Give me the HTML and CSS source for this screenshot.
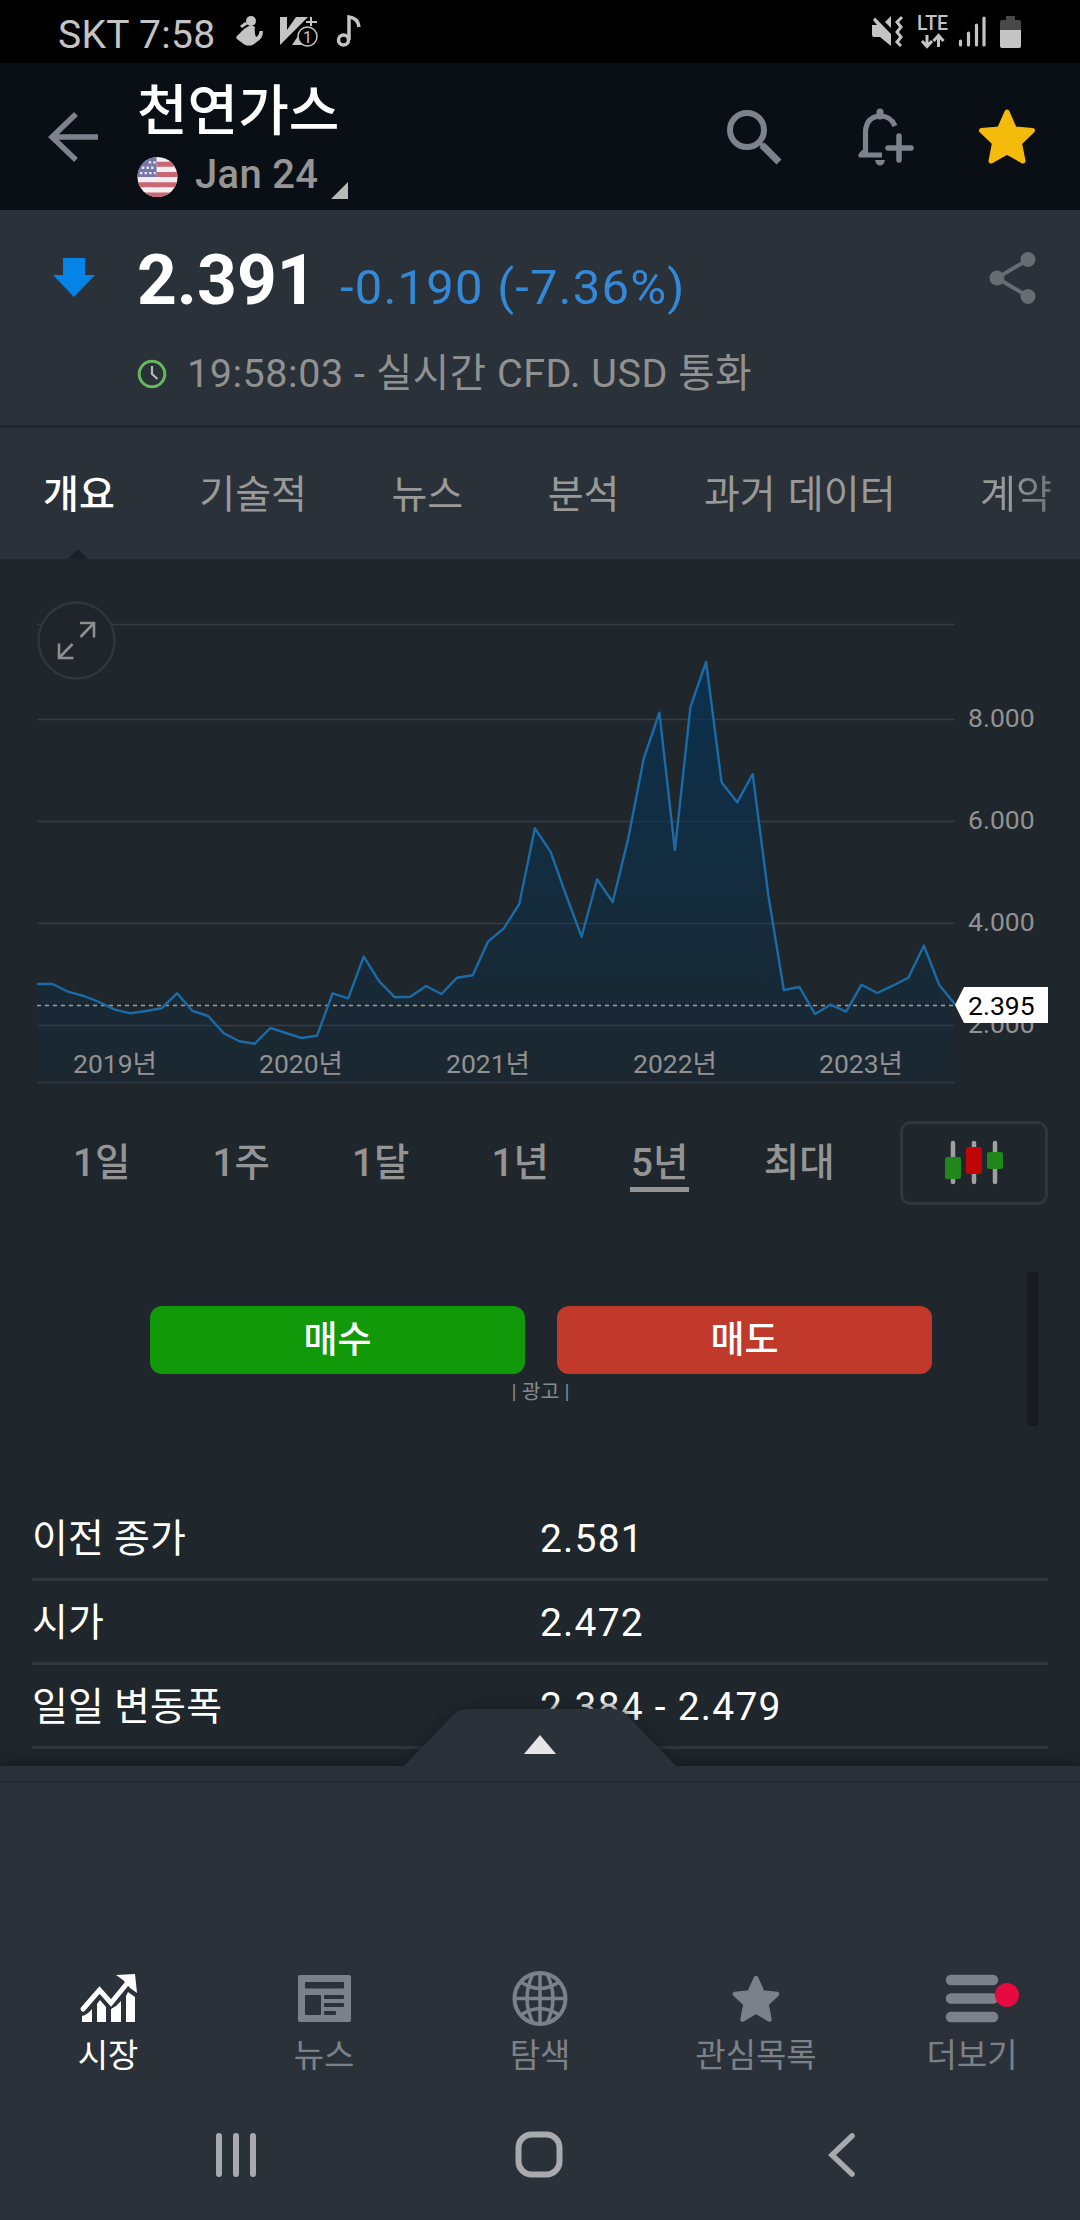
FILE: index.html
```html
<!DOCTYPE html>
<html lang="ko">
<head>
<meta charset="utf-8">
<title>천연가스</title>
<link rel="stylesheet" href="styles.css">
</head>
<body>
<div class="phone">
  <div class="status">
    <span class="carrier">SKT 7:58</span>
    <svg class="status-left" width="130" height="40" viewBox="0 0 130 40">
      <g fill="#c4c4c4">
        <circle cx="16" cy="9" r="5"/>
        <path d="M10 10 L5 14 L7 16 L13 12 Z"/>
        <path d="M12 15 Q16 12 20 15 Q19 20 21 25 Q24 24 24.500 19 L28 19 Q28 27 21 30.500 Q17 35 10 33 L2 27 Q0 25 3 23 L9 17 Z"/>
        <path d="M45 5 H52 V18 L61 5 H73 L45 33 Z"/>
        <path d="M57 33 L63 24 L67 33 Z"/>
      </g>
      <path d="M76 5 V14 M71 10 H82" stroke="#c4c4c4" stroke-width="2"/>
      <circle cx="72.500" cy="24.500" r="9.500" fill="#000" stroke="#c4c4c4" stroke-width="1.500"/>
      <text class="badge-num" x="72.500" y="30.500" text-anchor="middle">1</text>
      <g fill="none" stroke="#c4c4c4" stroke-width="3.500">
        <circle cx="108.500" cy="28" r="5"/>
        <path d="M114 28 V5 Q123 6 124 15"/>
      </g>
    </svg>
    <svg class="status-right" width="154" height="40" viewBox="0 0 154 40">
      <g fill="#c4c4c4">
        <path d="M2 13 H7 L3 8 L5 5.500 L21 22 V34 L10 25 H4 Q2 25 2 23 Z"/>
        <path d="M21 4 V16 L15 10 Z"/>
      </g>
      <path d="M32 5 L27 10 L31 15 L27 20 L31 25 L27 30 L31 34" fill="none" stroke="#c4c4c4" stroke-width="3"/>
      <text class="lte" x="47" y="17.500" textLength="31" lengthAdjust="spacingAndGlyphs">LTE</text>
      <path d="M57 23 V34 M52 29 L57 34.500 L62 29 M68.500 35 V24 M63.500 29 L68.500 23.500 L73.500 29" fill="none" stroke="#c4c4c4" stroke-width="3"/>
      <path d="M90.500 29 V33 M98.500 21 V33 M106.500 13 V33 M114 6 V33" stroke="#c4c4c4" stroke-width="3.200" stroke-linecap="round"/>
      <path d="M136 4 H145 V8 H149 Q151 8 151 10 V19 H130 V10 Q130 8 132 8 H136 Z" fill="#484848"/>
      <path d="M130 18 H151 V34 Q151 36 149 36 H132 Q130 36 130 34 Z" fill="#c4c4c4"/>
    </svg>
  </div>

  <header class="topbar">
    <svg class="back" width="52" height="52" viewBox="0 0 52 52"><path d="M50 26 H4 M28 3 L4 26 L28 49" fill="none" stroke="#7d828c" stroke-width="5.500"/></svg>
    <div class="heading">
      <h1>천연가스</h1>
      <div class="contract">
        <svg width="41" height="42" viewBox="0 0 42 42">
          <defs><clipPath id="round"><circle cx="21" cy="21" r="20.500"/></clipPath></defs>
          <g clip-path="url(#round)">
            <rect width="42" height="42" fill="#f3eef0"/>
            <path d="M20 8 H42 M20 18.500 H42 M0 29 H42 M0 39.500 H42" stroke="#ca6673" stroke-width="5.200"/>
            <rect width="20" height="21" fill="#7777a5"/>
            <path d="M12 6 H20 M5 11.500 H18 M3 17 H19" stroke="#e8e8f5" stroke-width="2.500" stroke-dasharray="2.500 2.200"/>
          </g>
        </svg>
        <span>Jan 24</span>
        <i class="corner"></i>
      </div>
    </div>
    <svg width="56" height="58" viewBox="0 0 56 58"><circle cx="21" cy="22" r="17" fill="none" stroke="#7d828c" stroke-width="6"/><path d="M36 37 L53 54" stroke="#7d828c" stroke-width="7"/><path d="M32 33 L38 39" stroke="#7d828c" stroke-width="4"/></svg>
    <svg width="58" height="60" viewBox="0 0 58 60">
      <g fill="none" stroke="#7d828c" stroke-width="5.200">
        <path d="M25 48 H6 L8.500 44 V25 Q9 10 23 9 Q34 9 38 19"/>
        <path d="M23 9 V5" stroke-width="7" stroke-linecap="round"/>
        <path d="M42 29 V53 M31 41 H54" stroke-width="5.500" stroke-linecap="round"/>
      </g>
      <path d="M1 49 Q2 45 7 42 L11 43 V49 Z M18 53 H28 Q27 58.500 23 58.500 Q19 58.500 18 53" fill="#7d828c"/>
    </svg>
    <svg width="58" height="58" viewBox="0 0 58 58"><path d="M29 4 L36.500 21 L54.500 22.500 L41.500 35 L45 53 L29 44 L13 53 L16.500 35 L3.500 22.500 L21.500 21 Z" fill="#f5bb0c" stroke="#f5bb0c" stroke-width="5" stroke-linejoin="round"/></svg>
  </header>

  <section class="quote">
    <svg class="down" width="42" height="40" viewBox="0 0 42 40"><path d="M10 0 H32 V17 H42 L21 39 L0 17 H10 Z" fill="#0683e6"/></svg>
    <div class="price-row"><strong>2.391</strong><span>-0.190 (-7.36%)</span></div>
    <svg class="share" width="48" height="54" viewBox="0 0 48 54"><path d="M40 8 L8 27 L40 46" fill="none" stroke="#686c73" stroke-width="4"/><g fill="#686c73"><circle cx="39" cy="8.500" r="7.500"/><circle cx="8" cy="27" r="7.500"/><circle cx="39" cy="45.500" r="7.500"/></g></svg>
    <div class="time-row">
      <svg width="30" height="30" viewBox="0 0 30 30"><circle cx="15" cy="15" r="12.800" fill="none" stroke="#67b65e" stroke-width="3"/><path d="M15 7 V15 L20.500 20" fill="none" stroke="#b5bab5" stroke-width="2.200"/></svg>
      <span>19:58:03 - 실시간 CFD. USD 통화</span>
    </div>
  </section>

  <nav class="tabs">
    <span class="tab active">개요</span><span class="tab">기술적</span><span class="tab">뉴스</span><span class="tab">분석</span><span class="tab">과거 데이터</span><span class="tab fade">계약</span>
  </nav>

  <main class="content">
    <svg class="chart" width="1080" height="541" viewBox="0 559 1080 541">
      <defs><linearGradient id="fill" x1="0" y1="661" x2="0" y2="1083" gradientUnits="userSpaceOnUse"><stop offset="0" stop-color="#073256" stop-opacity=".85"/><stop offset="1" stop-color="#07324e" stop-opacity=".12"/></linearGradient></defs>
      <path class="grid" d="M37 624.500 H955 M37 719.500 H955 M37 821.500 H955 M37 923.500 H955 M37 1025.500 H955 M37 1082.500 H955"/>
      <path id="area" fill="url(#fill)"/>
      <path d="M37 1005.500 H955" stroke="#9a9fa3" stroke-width="1.300" stroke-dasharray="4 4"/>
      <polyline id="line" fill="none" stroke="#1b6ca6" stroke-width="2.400" stroke-linejoin="round"/>
      <circle cx="76.500" cy="640.500" r="38" fill="#1f252b" stroke="#31363e" stroke-width="2.500"/>
      <path d="M80.500 637 L94 623 M80 623 H94 V637.500 M72.500 644 L59 658 M59 643.500 V658 H73.500" fill="none" stroke="#8e8e8e" stroke-width="2.600"/>
      <g class="axis">
        <text x="968" y="726.500">8.000</text><text x="968" y="828.500">6.000</text><text x="968" y="930.500">4.000</text><text x="968" y="1032.500">2.000</text>
        <g text-anchor="middle"><text x="115" y="1072.500">2019년</text><text x="301" y="1072.500">2020년</text><text x="488" y="1072.500">2021년</text><text x="675" y="1072.500">2022년</text><text x="861" y="1072.500">2023년</text></g>
      </g>
      <path d="M955 1005 L964 987 H1048 V1023 H964 Z" fill="#fff"/>
      <text class="last" x="968" y="1014.500">2.395</text>
    </svg>

    <div class="periods">
      <div class="period-list">
        <span>1일</span><span>1주</span><span>1달</span><span>1년</span><span class="on">5년</span><span>최대</span>
      </div>
      <div class="candle">
        <svg width="60" height="46" viewBox="0 0 60 46"><path d="M9 3 V42 M30 3 V42 M51 3 V42" stroke="#a0a0a0" stroke-width="4.500" stroke-linecap="round"/><rect x="1" y="17" width="16" height="22" rx="2" fill="#21861b"/><rect x="22" y="7" width="16" height="27" rx="2" fill="#c00505"/><rect x="43" y="12" width="16" height="17" rx="2" fill="#21861b"/></svg>
      </div>
    </div>

    <div class="ad">
      <div class="trade"><span class="buy">매수</span><span class="sell">매도</span></div>
      <i class="ad-edge"></i>
      <small>| 광고 |</small>
    </div>

    <dl class="stats">
      <div><dt>이전 종가</dt><dd>2.581</dd></div>
      <div><dt>시가</dt><dd>2.472</dd></div>
      <div><dt>일일 변동폭</dt><dd>2.384 - 2.479</dd></div>
    </dl>
  </main>

  <footer class="dock">
    <svg class="handle" width="274" height="58" viewBox="0 0 274 58"><path d="M0 58 L50 6 Q56 0 64 0 H210 Q218 0 224 6 L274 58 Z" fill="#2a3138"/><path d="M137 26 L153 45 H121 Z" fill="#e6e6e6"/></svg>
    <div class="banner"></div>
    <div class="nav">
      <div class="item current">
        <svg width="60" height="60" viewBox="0 0 60 60">
          <path d="M5 41 L21.500 22 L33 35 L51 13" fill="none" stroke="#fff" stroke-width="5" stroke-linejoin="miter" stroke-linecap="round"/>
          <path d="M38 7 L57 6 L59 25 L52 20 L45 12 Z" fill="#fff"/>
          <path d="M4 54 V48 Q9 47 14 41 V54 Z M19 54 V36 L22 32 L28 39 V54 Z M33 54 V41 L38 38 L43 33 V54 Z M48 54 V28 L50 24 L57 29 V54 Z" fill="#fff"/>
        </svg><span>시장</span>
      </div>
      <div class="item">
        <svg width="60" height="60" viewBox="0 0 60 60"><rect x="4" y="7" width="53" height="47" rx="2" fill="#7c8189"/><g fill="#2a3138"><rect x="11" y="14" width="39" height="6.500" rx="1"/><rect x="11" y="27" width="16" height="20" rx="1"/><rect x="30" y="27" width="20" height="4" rx="1"/><rect x="30" y="35" width="20" height="4" rx="1"/><rect x="30" y="43" width="12" height="4" rx="1"/></g></svg><span>뉴스</span>
      </div>
      <div class="item">
        <svg width="60" height="60" viewBox="0 0 60 60"><g fill="none" stroke="#7c8189" stroke-width="3.500"><circle cx="30" cy="30.500" r="25.500" stroke-width="4"/><path d="M30 5 V56 M5 30.500 H55 M11 14 Q30 27 49 14 M11 47 Q30 34 49 47 M23 6 Q11 30 23 55 M37 6 Q49 30 37 55"/></g></svg><span>탐색</span>
      </div>
      <div class="item">
        <svg width="60" height="60" viewBox="0 0 60 60"><path d="M30 10 L36.500 24.500 L51 26 L40.500 36 L43.500 51.500 L30 43.500 L16.500 51.500 L19.500 36 L9 26 L23.500 24.500 Z" fill="#7c8189" stroke="#7c8189" stroke-width="4.500" stroke-linejoin="round"/></svg><span>관심목록</span>
      </div>
      <div class="item">
        <svg width="100" height="60" viewBox="-20 0 100 60"><path d="M9 12 H51 M9 30.500 H51 M9 49 H51" stroke="#7c8189" stroke-width="10.500" stroke-linecap="round"/><circle cx="65" cy="27" r="12" fill="#e50a40"/></svg><span>더보기</span>
      </div>
    </div>
    <div class="system">
      <svg width="46" height="46" viewBox="0 0 46 46"><path d="M6 4 V42 M23 4 V42 M40 4 V42" stroke="#a9aaad" stroke-width="6" stroke-linecap="round"/></svg>
      <svg width="50" height="50" viewBox="0 0 50 50"><rect x="4.500" y="4.500" width="41" height="40" rx="13" fill="none" stroke="#a9aaad" stroke-width="6"/></svg>
      <svg width="46" height="46" viewBox="0 0 46 46"><path d="M33 4 L13 23 L33 42" fill="none" stroke="#a9aaad" stroke-width="5.500" stroke-linecap="round"/></svg>
    </div>
  </footer>
</div>
<script src="chart.js"></script>
</body>
</html>
```
FILE: chart.js
```js
// Monthly closes, as plotted heights on the chart canvas.
const heights = [984, 984, 991.7, 996, 1002, 1009.7, 1013.3, 1011, 1008.3, 993.3, 1011, 1016, 1033.3, 1041.3, 1043.7, 1028, 1033, 1038, 1035.7, 993.3, 998.3, 956.7, 981.3, 997.3, 996.7, 986, 994, 977.7, 975.3, 941.3, 928.3, 904, 828.3, 851.7, 895, 936.7, 879.3, 902, 838.3, 758.3, 712.7, 850, 706.7, 662, 782.3, 802.3, 774, 895, 990, 987, 1014, 1004.7, 1011.7, 984.7, 993, 985.7, 977.7, 945.7, 985.3, 1004.3];
const step = (955 - 37) / (heights.length - 1);
const points = heights.map((y, i) => `${(37 + i * step).toFixed(1)},${y}`).join(' ');
document.getElementById('line').setAttribute('points', points);
document.getElementById('area').setAttribute('d', `M37,1083 L${points} L955,1083 Z`);
```
FILE: styles.css
```css
* { box-sizing: border-box; }
body { margin: 0; background: #1f262c; font-family: Roboto, "Noto Sans CJK KR", sans-serif; }
svg { display: block; flex: none; }
h1, dl, dd { margin: 0; }

.phone { width: 1080px; height: 2220px; display: flex; flex-direction: column; overflow: hidden; }

.status { height: 63px; background: #000; display: flex; align-items: center; padding: 6px 56px 0 58px; color: #c4c4c4; }
.carrier { font-size: 39px; line-height: 46px; white-space: nowrap; width: 177px; letter-spacing: .3px; }
.status-right { margin-left: auto; margin-top: -5px; }
.status-left { margin-top: -5px; }
.badge-num { font-size: 16px; fill: #c4c4c4; }
.lte { font-size: 20px; font-weight: 500; fill: #c4c4c4; }

.topbar { height: 147px; background: #0a0f16; display: flex; align-items: center; padding: 0 44px 0 48px; }
.back { margin-right: 37px; }
.heading { flex: 1; height: 147px; padding-top: 13px; }
h1 { font-size: 55px; line-height: 70px; font-weight: 500; color: #fff; }
.contract { display: flex; align-items: center; margin-top: 9px; height: 44px; color: #959595; font-size: 40px; line-height: 44px; font-weight: 500; }
.contract span { margin: -5px 13px 0 17px; letter-spacing: .3px; }
.corner { align-self: flex-end; border-left: 17px solid transparent; border-bottom: 17px solid #b8b8b8; }
.topbar > svg:nth-of-type(2) { margin-right: 75px; }
.topbar > svg:nth-of-type(3) { margin-right: 63px; }

.quote { height: 218px; background: #2a3138; border-bottom: 3px solid #22272e; display: grid; grid-template-columns: 84px 1fr 48px; grid-template-rows: 88px 60px; padding: 24px 43px 0 53px; align-items: center; row-gap: 22px; }
.price-row { display: flex; align-items: baseline; white-space: nowrap; padding-top: 6px; }
.price-row strong { font-size: 69.5px; line-height: 88px; color: #fff; width: 203px; }
.price-row span { font-size: 49px; color: #3389d8; letter-spacing: 1.2px; }
.time-row { grid-column: 2 / 4; display: flex; align-items: center; gap: 20px; color: #919191; font-size: 39.5px; line-height: 60px; white-space: nowrap; letter-spacing: .55px; }

.tabs { height: 131px; background: #2a3138; display: flex; align-items: center; gap: 84.5px; padding: 3px 0 0 43px; white-space: nowrap; color: #999; font-size: 39px; line-height: 60px; word-spacing: 2.5px; }
.tab { flex: none; position: relative; }
.active { color: #fff; font-weight: 500; }
.active::after { content: ""; position: absolute; left: 25px; bottom: -34px; border: 10px solid transparent; border-top: 0; border-bottom-color: #1a1f26; }
.fade { color: transparent; background: linear-gradient(90deg, #999 40%, #6e7276); -webkit-background-clip: text; background-clip: text; }

.content { flex: 1; min-height: 0; background: #1f262c; overflow: hidden; }
.grid { stroke: #373d44; stroke-width: 1.3; fill: none; }
.axis { font-size: 26.5px; fill: #929292; }
.last { font-size: 26.5px; fill: #000; }

.periods { margin: 21px 32px 0; display: flex; height: 84px; }
.period-list { width: 837px; display: flex; padding-top: 12px; }
.period-list span { flex: 1; display: flex; justify-content: center; height: 60px; font-size: 38.5px; line-height: 60px; color: #949494; font-weight: 500; }
.period-list .on::after { content: ""; position: absolute; margin-top: 54px; width: 59px; height: 5px; background: #949494; }
.candle { margin-left: auto; width: 148px; height: 84px; border: 3px solid #31363e; border-radius: 11px; display: grid; place-items: center; }

.ad { margin-top: 67px; height: 154px; display: grid; grid-template-columns: 1fr 11px; grid-template-rows: 102px 1fr; padding-right: 42px; }
.trade { display: flex; gap: 32px; padding: 34px 0 0 150px; }
.trade span { width: 375px; height: 68px; border-radius: 12px; color: #fff; font-size: 37px; font-weight: 500; line-height: 70px; text-align: center; }
.buy { background: #11990a; }
.sell { background: #c0392b; }
.ad-edge { background: #181c20; grid-row: 1 / 3; grid-column: 2; }
.ad small { grid-column: 1; padding-left: 54px; text-align: center; color: #858a8f; font-size: 20.5px; line-height: 36px; }

.stats { margin: 71px 32px 0; color: #fff; font-size: 39px; }
.stats div { display: grid; grid-template-columns: 508px 1fr; height: 84px; border-bottom: 3px solid #31363e; line-height: 60px; padding-top: 12px; }
.stats dt { letter-spacing: .2px; }
.stats dd { letter-spacing: 1.2px; }

.dock { height: 454px; background: #2a3138; position: relative; display: flex; flex-direction: column; box-shadow: 0 -2px 12px #15191e; }
.handle { position: absolute; left: 403px; top: -57px; filter: drop-shadow(0 -3px 5px #15191e99); clip-path: inset(-20px -20px 0); }
.banner { height: 17px; border-bottom: 2px solid #252a31; }
.nav { margin-top: 185px; display: grid; grid-template-columns: repeat(5, 1fr); color: #7c8189; }
.item { display: flex; flex-direction: column; align-items: center; font-size: 33px; line-height: 48px; }
.item span { margin-top: 4px; }
.current { color: #fff; }
.system { display: flex; justify-content: space-between; align-items: center; margin-top: 50px; padding: 0 215px 0 213px; }
```
